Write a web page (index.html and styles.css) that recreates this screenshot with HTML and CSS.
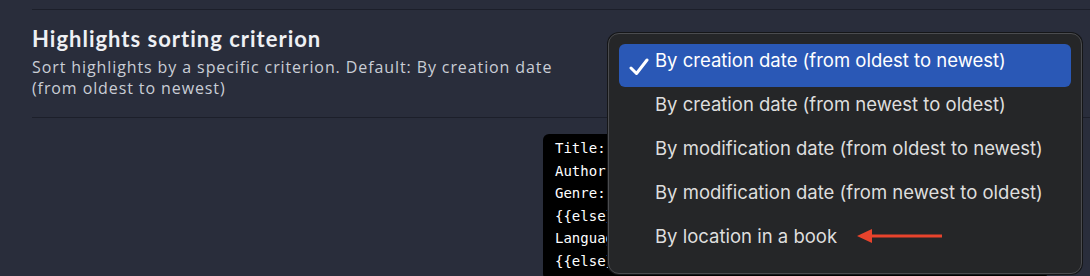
FILE: index.html
```html
<!DOCTYPE html>
<html lang="en">

<head>
    <meta charset="utf-8">
    <title>Highlights sorting criterion</title>
    <link rel="stylesheet" href="styles.css">
</head>

<body>

    <section class="settings">
        <div class="setting">
            <div class="info">
                <h2>Highlights sorting criterion</h2>
                <p class="desc">Sort highlights by a specific criterion. Default: By creation date (from oldest to newest)</p>
            </div>
        </div>

        <pre class="template">Title:: {{title}}
Author:: {{author}}
Genre:: {{#if genre}}{{genre}}
{{else}}-{{/if}}
Language:: {{#if language}}{{language}}
{{else}}-{{/if}}</pre>
    </section>

    <ul class="menu">
        <li class="valgt">
            <svg class="check" width="20" height="18" viewBox="0 0 20 18">
                <path d="M2 10 L7.5 15.5 L18 2" fill="none" stroke="white" stroke-width="3" stroke-linecap="round" stroke-linejoin="round" />
            </svg>
            By creation date (from oldest to newest)
        </li>
        <li>By creation date (from newest to oldest)</li>
        <li>By modification date (from oldest to newest)</li>
        <li>By modification date (from newest to oldest)</li>
        <li>By location in a book<svg class="arrow" width="86" height="16" viewBox="0 0 86 16">
                <path d="M0 8 L15 1 L15 6.5 L85 6.5 L85 9.5 L15 9.5 L15 15 Z" fill="#e8432c" />
            </svg></li>
    </ul>

</body></html>
```

FILE: styles.css
```css
body {
    margin: 0;
    background-color: #292d3b;
    overflow: hidden;
}

.settings {
    padding: 9px 0 0 32px;
}

.setting {
    border-top: 1px solid #1c1f2a;
    border-bottom: 1px solid #1c1f2a;
    padding: 17px 0 18px 0;
}

.setting h2 {
    margin: 0;
    font-family: 'Lato', sans-serif;
    font-weight: 700;
    font-size: 22px;
    letter-spacing: 1px;
    line-height: 24px;
    color: #eef0f4;
}

.desc {
    margin: 6px 0 0 0;
    max-width: 545px;
    font-family: 'Open Sans', sans-serif;
    font-size: 16px;
    letter-spacing: 0.9px;
    line-height: 21px;
    color: #c9cdd6;
}

.template {
    margin: 16px 0 0 511px;
    width: 480px;
    height: 140px;
    padding: 3px 12px;
    background-color: #000;
    border-radius: 6px;
    font-family: 'DejaVu Sans Mono', monospace;
    font-size: 14px;
    line-height: 22.5px;
    color: #fff;
}

.menu {
    position: absolute;
    top: 33px;
    left: 608px;
    width: 452px;
    margin: 0;
    padding: 10px 10px 9px 10px;
    list-style: none;
    background-color: #252628;
    border: 1px solid #4b4c4f;
    border-radius: 11px;
    box-shadow: 0 0 0 1px #151618;
}

.menu li {
    position: relative;
    height: 44px;
    padding-left: 36px;
    font-family: 'Inter', sans-serif;
    font-size: 18.5px;
    line-height: 32px;
    color: #dedede;
}

.menu li.valgt {
    height: 43px;
    margin-bottom: 1px;
    background-color: #2a58b6;
    border-radius: 6px;
    color: #fff;
}

.check {
    position: absolute;
    left: 10px;
    top: 14px;
}

.arrow {
    margin-left: 20px;
    vertical-align: -1px;
}
```
